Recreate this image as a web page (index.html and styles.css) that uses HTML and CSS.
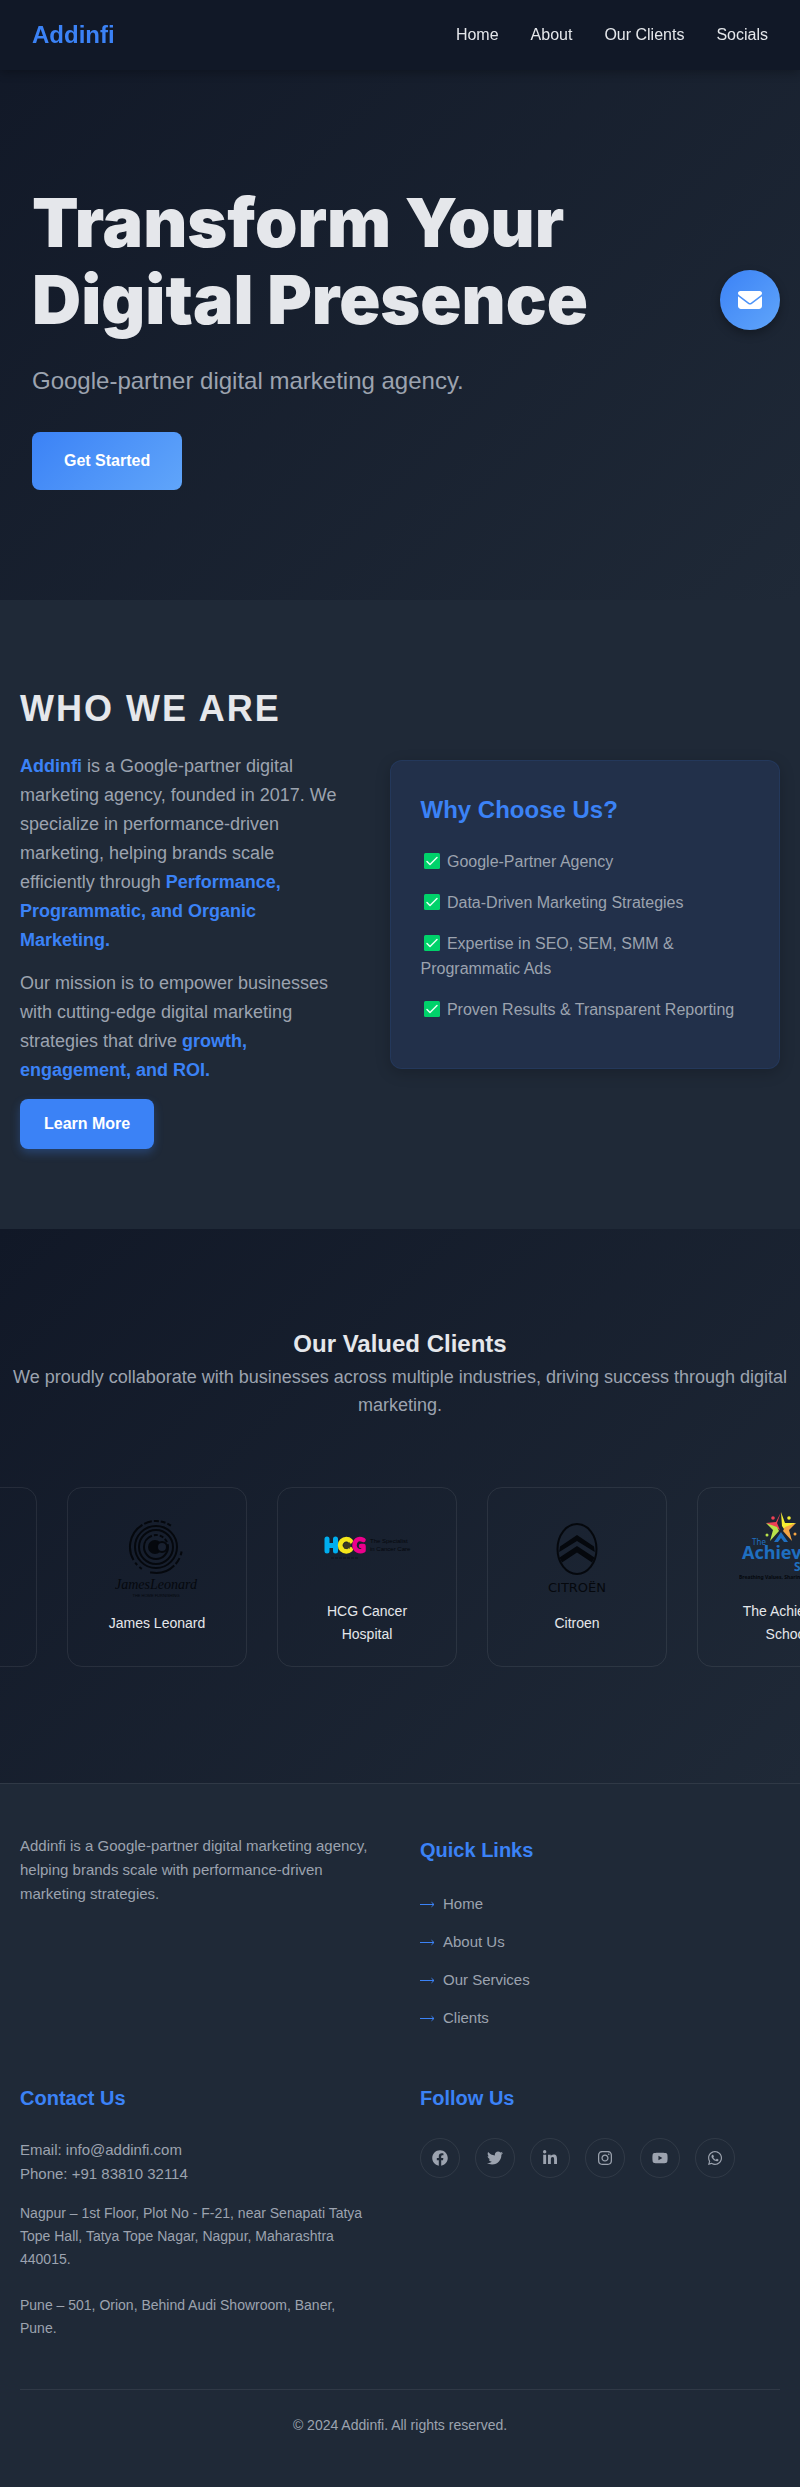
FILE: index.html
```
<!DOCTYPE html>
<html lang="en">
<head>
<meta charset="utf-8">
<meta name="viewport" content="width=device-width, initial-scale=1">
<title>Addinfi</title>
<link rel="stylesheet" href="styles.css">
</head>
<body>
<header class="navbar">
  <a class="brand" href="#home">Addinfi</a>
  <nav class="nav-links">
    <a href="#home">Home</a>
    <a href="#about">About</a>
    <a href="#clients">Our Clients</a>
    <a href="#socials">Socials</a>
  </nav>
</header>

<main>
  <section class="hero" id="home">
    <h1>Transform Your Digital Presence</h1>
    <p>Google-partner digital marketing agency.</p>
    <a class="btn btn-gradient" href="#about">Get Started</a>
    <a class="mail-fab" href="mailto:info@addinfi.com" aria-label="Email us">
      <svg width="24" height="24" viewBox="0 0 512 512" fill="currentColor"><path d="M48 64C21.5 64 0 85.5 0 112c0 15.1 7.1 29.3 19.2 38.4L236.8 313.6c11.400 8.500 27 8.500 38.400 0L492.800 150.400c12.100-9.100 19.200-23.300 19.200-38.400c0-26.500-21.500-48-48-48H48zM0 176V384c0 35.300 28.700 64 64 64H448c35.300 0 64-28.700 64-64V176L294.400 339.200c-22.800 17.100-54 17.100-76.800 0L0 176z"/></svg>
    </a>
  </section>

  <section class="about" id="about">
    <div class="about-text">
      <h2>WHO WE ARE</h2>
      <p><strong>Addinfi</strong> is a Google-partner digital marketing agency, founded in 2017. We specialize in performance-driven marketing, helping brands scale efficiently through <strong>Performance, Programmatic, and Organic Marketing.</strong></p>
      <p>Our mission is to empower businesses with cutting-edge digital marketing strategies that drive <strong>growth, engagement, and ROI.</strong></p>
      <a class="btn btn-solid" href="#clients">Learn More</a>
    </div>
    <div class="why-card">
      <h3>Why Choose Us?</h3>
      <ul>
        <li><svg class="check" viewBox="0 0 22 16"><rect x="3" width="16" height="16" rx="1.500" fill="#00d26a"/><path d="M6 8.500l3 3 7-7" fill="none" stroke="#e6fff2" stroke-width="1.500" stroke-linecap="round" stroke-linejoin="round"/></svg> Google-Partner Agency</li>
        <li><svg class="check" viewBox="0 0 22 16"><rect x="3" width="16" height="16" rx="1.500" fill="#00d26a"/><path d="M6 8.500l3 3 7-7" fill="none" stroke="#e6fff2" stroke-width="1.500" stroke-linecap="round" stroke-linejoin="round"/></svg> Data-Driven Marketing Strategies</li>
        <li><svg class="check" viewBox="0 0 22 16"><rect x="3" width="16" height="16" rx="1.500" fill="#00d26a"/><path d="M6 8.500l3 3 7-7" fill="none" stroke="#e6fff2" stroke-width="1.500" stroke-linecap="round" stroke-linejoin="round"/></svg> Expertise in SEO, SEM, SMM &amp; Programmatic Ads</li>
        <li><svg class="check" viewBox="0 0 22 16"><rect x="3" width="16" height="16" rx="1.500" fill="#00d26a"/><path d="M6 8.500l3 3 7-7" fill="none" stroke="#e6fff2" stroke-width="1.500" stroke-linecap="round" stroke-linejoin="round"/></svg> Proven Results &amp; Transparent Reporting</li>
      </ul>
    </div>
  </section>

  <section class="clients" id="clients">
    <div class="clients-head">
      <h2>Our Valued Clients</h2>
      <p>We proudly collaborate with businesses across multiple industries, driving success through digital marketing.</p>
    </div>
    <div class="carousel">
      <div class="track">
        <div class="client" aria-hidden="true"></div>
        <div class="client">
          <svg class="logo" viewBox="0 0 96 80" fill="none" stroke="#05080d">
            <circle cx="47" cy="27" r="26" stroke-width="2" stroke-dasharray="4 3 7 2 26 9 3 3 3 3 40 2 8 2 5 2 5 2 4 60" transform="rotate(10 47 27)"/>
            <circle cx="47" cy="27" r="21" stroke-width="2"/>
            <circle cx="47" cy="27" r="17" stroke-width="2"/>
            <circle cx="47" cy="27" r="12" stroke-width="2" stroke-dasharray="52 2 4 2 4 2 4 2"/>
            <circle cx="46" cy="27" r="7" fill="#05080d" stroke="none"/>
            <circle cx="53" cy="27" r="5" stroke="#05080d" fill="#18202f" stroke-width="2"/>
            <text x="47" y="69" class="mark mark-script">JamesLeonard</text>
            <text x="47" y="77" class="mark mark-tiny">THE HOME FURNISHING</text>
          </svg>
          <span>James Leonard</span>
        </div>
        <div class="client">
          <svg class="logo" viewBox="0 0 96 80">
            <g fill="none" stroke-width="5" stroke-linecap="round" stroke-linejoin="round">
              <path d="M8 31v12M16.500 31v12M8 37.500h8.500" stroke="#00aeef"/>
              <path d="M31.500 33a6 6 0 1 0 0 8.500" stroke="#f4e61a"/>
              <path d="M44.500 32c-6-3-9 1-9 5.500s5 7 9 5V38h-2.500" stroke="#ec008c" stroke-width="4.500"/>
            </g>
            <path d="M28 33.500l1 1.500 1.500-1 .3 1.700 1.700.3-1 1.500 1 1.500-1.700.3-.3 1.700-1.500-1-1 1.500-1-1.500-1.500 1-.3-1.700-1.200-.5.700-1.300-.7-1.500 1.500-.3.300-1.700 1.500 1z" fill="#3c3a22"/>
            <text x="51" y="35" class="mark mark-small">The Specialist</text>
            <text x="51" y="43" class="mark mark-small">in Cancer Care</text>
            <path d="M12 50h28" stroke="#0d121c" stroke-dasharray="3 1"/>
          </svg>
          <span>HCG Cancer Hospital</span>
        </div>
        <div class="client">
          <svg class="logo" viewBox="0 0 96 80">
            <ellipse cx="48" cy="29" rx="19.500" ry="25" fill="none" stroke="#05080d" stroke-width="2"/>
            <path d="M48 15l17 11.500.8 5.500L48 21 30.200 32l.8-5.500z" fill="#05080d"/>
            <path d="M48 26l17.500 11.500-2.500 5L48 32.500 33 42.500l-2.500-5z" fill="#05080d"/>
            <text x="48" y="72" class="mark mark-wide">CITROËN</text>
          </svg>
          <span>Citroen</span>
        </div>
        <div class="client">
          <svg class="logo" viewBox="0 0 96 80">
            <g transform="translate(42 20)">
              <path d="M0-16L-4-5-1 2-9-2-15-5-5-6z" fill="#ef4155"/>
              <path d="M0-16L4-5 15-5 3 1 1-2z" fill="#f5ee31"/>
              <path d="M-15-5L-8 2-11 13-2 3-4-1z" fill="#b9e34a"/>
              <path d="M15-5L8 2 11 13 2 3 4-1z" fill="#f5a544"/>
              <path d="M0 4L7 14H3L0 10-3 14H-7z" fill="#1f6fc0"/>
              <circle cx="-8" cy="-10" r="1.800" fill="#ef4155"/>
              <circle cx="8" cy="-10" r="1.800" fill="#f5ee31"/>
              <circle cx="-14" cy="7" r="1.500" fill="#b9e34a"/>
              <circle cx="14" cy="6" r="1.500" fill="#f5a544"/>
            </g>
            <text x="13" y="37" class="mark mark-the">The</text>
            <text x="3" y="51" class="mark mark-achievers">Achievers</text>
            <text x="55" y="63" class="mark mark-school">School</text>
            <text x="0" y="71" class="mark mark-tag">Breathing Values, Sharing Wisdom</text>
          </svg>
          <span>The Achievers School</span>
        </div>
      </div>
    </div>
  </section>
</main>

<footer class="footer" id="socials">
  <div class="footer-grid">
    <div>
      <p class="footer-about">Addinfi is a Google-partner digital marketing agency, helping brands scale with performance-driven marketing strategies.</p>
    </div>
    <div>
      <h3>Quick Links</h3>
      <ul class="quick">
        <li><a href="#home"><svg class="arrow" viewBox="0 0 15 7"><path d="M0 3.500h14M11.500 1.200l2.500 2.300-2.500 2.300"/></svg>Home</a></li>
        <li><a href="#about"><svg class="arrow" viewBox="0 0 15 7"><path d="M0 3.500h14M11.500 1.200l2.500 2.300-2.500 2.300"/></svg>About Us</a></li>
        <li><a href="#services"><svg class="arrow" viewBox="0 0 15 7"><path d="M0 3.500h14M11.500 1.200l2.500 2.300-2.500 2.300"/></svg>Our Services</a></li>
        <li><a href="#clients"><svg class="arrow" viewBox="0 0 15 7"><path d="M0 3.500h14M11.500 1.200l2.500 2.300-2.500 2.300"/></svg>Clients</a></li>
      </ul>
    </div>
    <div>
      <h3>Contact Us</h3>
      <p class="contact">Email: info@addinfi.com<br>Phone: +91 83810 32114</p>
      <address>Nagpur – 1st Floor, Plot No - F-21, near Senapati Tatya Tope Hall, Tatya Tope Nagar, Nagpur, Maharashtra 440015.<br><br>Pune – 501, Orion, Behind Audi Showroom, Baner, Pune.</address>
    </div>
    <div>
      <h3>Follow Us</h3>
      <div class="social">
        <a href="#facebook" aria-label="Facebook"><svg viewBox="0 0 512 512"><path d="M504 256C504 119 393 8 256 8S8 119 8 256c0 123.780 90.690 226.380 209.250 245V327.690h-63V256h63v-54.640c0-62.150 37-96.480 93.670-96.480 27.140 0 55.520 4.840 55.520 4.840v61h-31.280c-30.800 0-40.410 19.120-40.410 38.730V256h68.780l-11 71.690h-57.780V501C413.310 482.380 504 379.780 504 256z"/></svg></a>
        <a href="#twitter" aria-label="Twitter"><svg viewBox="0 0 512 512"><path d="M459.370 151.716c.325 4.548.325 9.097.325 13.645 0 138.720-105.583 298.558-298.558 298.558-59.452 0-114.680-17.219-161.137-47.106 8.447.974 16.568 1.299 25.340 1.299 49.055 0 94.213-16.568 130.274-44.832-46.132-.975-84.792-31.188-98.112-72.772 6.498.974 12.995 1.624 19.818 1.624 9.421 0 18.843-1.300 27.614-3.573-48.081-9.747-84.143-51.980-84.143-102.985v-1.299c13.969 7.797 30.214 12.670 47.431 13.319-28.264-18.843-46.781-51.005-46.781-87.391 0-19.492 5.197-37.360 14.294-52.954 51.655 63.675 129.300 105.258 216.365 109.807-1.624-7.797-2.599-15.918-2.599-24.040 0-57.828 46.782-104.934 104.934-104.934 30.213 0 57.502 12.670 76.670 33.137 23.715-4.548 46.456-13.320 66.599-25.340-7.798 24.366-24.366 44.833-46.132 57.827 21.117-2.273 41.584-8.122 60.426-16.243-14.292 20.791-32.161 39.308-52.628 54.253z"/></svg></a>
        <a href="#linkedin" aria-label="LinkedIn"><svg viewBox="-32 0 512 512"><path d="M100.280 448H7.400V148.900h92.880zM53.790 108.100C24.090 108.100 0 83.500 0 53.800a53.790 53.790 0 0 1 107.580 0c0 29.700-24.100 54.300-53.790 54.300zM447.900 448h-92.680V302.400c0-34.700-.7-79.200-48.290-79.200-48.290 0-55.690 37.700-55.690 76.700V448h-92.780V148.900h89.080v40.800h1.300c12.400-23.500 42.690-48.300 87.880-48.300 94 0 111.280 61.900 111.280 142.300V448z"/></svg></a>
        <a href="#instagram" aria-label="Instagram"><svg viewBox="-32 0 512 512"><path d="M224.100 141c-63.600 0-114.900 51.300-114.900 114.900s51.300 114.900 114.900 114.900S339 319.500 339 255.900 287.700 141 224.100 141zm0 189.600c-41.100 0-74.700-33.500-74.700-74.700s33.500-74.700 74.700-74.700 74.700 33.500 74.700 74.700-33.600 74.700-74.700 74.700zm146.400-194.300c0 14.900-12 26.800-26.800 26.800-14.900 0-26.800-12-26.800-26.800s12-26.800 26.800-26.800 26.800 12 26.800 26.800zm76.100 27.200c-1.700-35.900-9.900-67.700-36.200-93.900-26.200-26.200-58-34.400-93.900-36.200-37-2.100-147.900-2.100-184.900 0-35.800 1.700-67.600 9.900-93.900 36.100s-34.400 58-36.200 93.900c-2.100 37-2.100 147.900 0 184.900 1.700 35.900 9.900 67.700 36.200 93.900s58 34.400 93.900 36.200c37 2.100 147.900 2.100 184.900 0 35.900-1.700 67.700-9.900 93.900-36.200 26.200-26.200 34.400-58 36.200-93.900 2.100-37 2.100-147.800 0-184.800zM398.800 388c-7.800 19.600-22.900 34.700-42.600 42.600-29.500 11.700-99.500 9-132.100 9s-102.700 2.600-132.100-9c-19.600-7.800-34.700-22.900-42.600-42.600-11.700-29.500-9-99.500-9-132.100s-2.600-102.700 9-132.100c7.800-19.600 22.900-34.700 42.600-42.600 29.500-11.700 99.500-9 132.100-9s102.700-2.600 132.100 9c19.600 7.800 34.700 22.900 42.600 42.600 11.700 29.500 9 99.500 9 132.100s2.700 102.700-9 132.100z"/></svg></a>
        <a href="#youtube" aria-label="YouTube"><svg viewBox="0 -32 576 576"><path d="M549.655 124.083c-6.281-23.650-24.787-42.276-48.284-48.597C458.781 64 288 64 288 64S117.220 64 74.629 75.486c-23.497 6.322-42.003 24.947-48.284 48.597-11.412 42.867-11.412 132.305-11.412 132.305s0 89.438 11.412 132.305c6.281 23.650 24.787 41.500 48.284 47.821C117.220 448 288 448 288 448s170.780 0 213.371-11.486c23.497-6.321 42.003-24.171 48.284-47.821 11.412-42.867 11.412-132.305 11.412-132.305s0-89.438-11.412-132.305zm-317.510 213.508V175.185l142.739 81.205-142.739 81.201z"/></svg></a>
        <a href="#whatsapp" aria-label="WhatsApp"><svg viewBox="-32 0 512 512"><path d="M380.900 97.100C339 55.100 283.200 32 223.900 32c-122.400 0-222 99.600-222 222 0 39.100 10.200 77.300 29.600 111L0 480l117.700-30.900c32.400 17.700 68.900 27 106.100 27h.1c122.300 0 224.100-99.600 224.100-222 0-59.300-25.200-115-67.100-157zm-157 341.600c-33.200 0-65.700-8.900-94-25.700l-6.700-4-69.800 18.300L72 359.200l-4.400-7c-18.500-29.400-28.200-63.300-28.200-98.200 0-101.700 82.800-184.500 184.600-184.500 49.300 0 95.600 19.200 130.400 54.100 34.800 34.900 56.200 81.200 56.100 130.500 0 101.800-84.900 184.600-186.600 184.600zm101.200-138.200c-5.500-2.800-32.800-16.200-37.900-18-5.100-1.900-8.800-2.800-12.500 2.800-3.700 5.600-14.300 18-17.600 21.800-3.200 3.700-6.500 4.200-12 1.400-32.600-16.300-54-29.100-75.500-66-5.700-9.800 5.700-9.100 16.300-30.300 1.800-3.700.9-6.900-.5-9.700-1.400-2.800-12.500-30.100-17.100-41.200-4.500-10.800-9.100-9.300-12.500-9.500-3.200-.2-6.900-.2-10.600-.2-3.700 0-9.700 1.400-14.800 6.900-5.100 5.600-19.400 19-19.400 46.300 0 27.300 19.900 53.700 22.600 57.400 2.800 3.700 39.100 59.700 94.800 83.800 35.200 15.200 49 16.500 66.600 13.900 10.700-1.600 32.800-13.400 37.400-26.400 4.600-13 4.600-24.100 3.200-26.400-1.300-2.500-5-3.900-10.500-6.600z"/></svg></a>
      </div>
    </div>
  </div>
  <p class="copyright">© 2024 Addinfi. All rights reserved.</p>
</footer>
</body>
</html>
```
FILE: styles.css
```
* {
  box-sizing: border-box;
  margin: 0;
  padding: 0;
}

:root {
  --dark: #111827;
  --panel: #1f2937;
  --blue: #3b82f6;
  --blue-light: #60a5fa;
  --text: #e5e7eb;
  --muted: #9ca3af;
  --line: rgba(255, 255, 255, 0.08);
}

body {
  background: var(--dark);
  color: var(--text);
  font-family: Arial, "Liberation Sans", sans-serif;
  font-size: 16px;
  line-height: 26px;
}

a {
  color: inherit;
  text-decoration: none;
}

ul {
  list-style: none;
}

/* Navigation */
.navbar {
  position: fixed;
  inset: 0 0 auto;
  z-index: 10;
  display: flex;
  align-items: center;
  justify-content: space-between;
  padding: 16px 32px;
  background: var(--dark);
  box-shadow: 0 2px 10px rgba(0, 0, 0, 0.3);
}

.brand {
  color: var(--blue);
  font-size: 24px;
  font-weight: 700;
  line-height: 38px;
}

.nav-links {
  display: flex;
  gap: 32px;
}

/* Hero */
.hero {
  position: relative;
  display: flex;
  flex-direction: column;
  align-items: flex-start;
  justify-content: center;
  min-height: 600px;
  padding: 74px 32px 0;
  background: linear-gradient(135deg, var(--dark), var(--panel));
}

.hero h1 {
  max-width: 640px;
  margin-bottom: 24px;
  font-family: "Arial Black", Inter, sans-serif;
  font-size: 68px;
  font-weight: 900;
  line-height: 77px;
}

.hero p {
  margin-bottom: 32px;
  color: var(--muted);
  font-size: 24px;
  line-height: 38px;
}

.btn {
  display: inline-block;
  border-radius: 8px;
  color: #fff;
  font-weight: 700;
}

.btn-gradient {
  padding: 16px 32px;
  background: linear-gradient(135deg, var(--blue), var(--blue-light));
}

.btn-solid {
  padding: 12px 24px;
  background: var(--blue);
  box-shadow: 0 4px 10px rgba(59, 130, 246, 0.3);
}

.mail-fab {
  position: absolute;
  top: 270px;
  right: 20px;
  display: flex;
  align-items: center;
  justify-content: center;
  width: 60px;
  height: 60px;
  border-radius: 50%;
  background: linear-gradient(135deg, var(--blue), var(--blue-light));
  box-shadow: 0 4px 10px rgba(0, 0, 0, 0.3);
  color: #fff;
}

/* About */
.about {
  display: grid;
  grid-template-columns: minmax(0, 9fr) minmax(0, 11fr);
  gap: 50px;
  align-items: center;
  padding: 80px 20px;
  background: var(--panel);
}

.about-text h2 {
  margin-bottom: 15px;
  font-size: 36px;
  letter-spacing: 2px;
  line-height: 57px;
}

.about-text p {
  margin-bottom: 14px;
  color: var(--muted);
  font-size: 18px;
  line-height: 29px;
}

.about-text strong {
  color: var(--blue);
}

.why-card {
  padding: 30px;
  border: 1px solid rgba(59, 130, 246, 0.1);
  border-radius: 12px;
  background: #22304a;
  box-shadow: 0 4px 15px rgba(0, 0, 0, 0.2);
  color: var(--muted);
}

.why-card h3 {
  margin-bottom: 20px;
  color: var(--blue);
  font-size: 24px;
  line-height: 38px;
}

.why-card li {
  margin-bottom: 16px;
  line-height: 25px;
}

.check {
  width: 22px;
  height: 16px;
  vertical-align: -2px;
}

/* Clients */
.clients {
  padding: 96px 0;
  background: linear-gradient(135deg, var(--dark), var(--panel));
}

.clients-head {
  margin-bottom: 48px;
  padding: 0 12px;
  text-align: center;
}

.clients-head h2 {
  font-size: 24px;
  line-height: 38px;
}

.clients-head p {
  color: var(--muted);
  font-size: 18px;
  line-height: 28px;
}

.carousel {
  overflow: hidden;
  padding: 20px 0;
}

.track {
  display: flex;
  gap: 30px;
  transform: translateX(-143px);
}

.client {
  display: flex;
  flex: 0 0 180px;
  flex-direction: column;
  align-items: center;
  justify-content: center;
  gap: 12px;
  height: 180px;
  padding: 20px 30px;
  border: 1px solid var(--line);
  border-radius: 15px;
  font-size: 14px;
  font-weight: 500;
  line-height: 23px;
  text-align: center;
}

.logo {
  flex: none;
  width: 96px;
  height: 80px;
}

.mark {
  fill: #05080d;
  stroke: none;
}

.mark-script {
  font: italic 14px "Liberation Serif", serif;
  text-anchor: middle;
}

.mark-tiny {
  font: 4px "Liberation Sans", sans-serif;
  text-anchor: middle;
}

.mark-small {
  font: 6px "Liberation Sans", sans-serif;
}

.mark-wide {
  font: 13px "DejaVu Sans", sans-serif;
  text-anchor: middle;
}

.mark-the,
.mark-achievers,
.mark-school {
  fill: #1f6fc0;
}

.mark-the {
  font: 8px "Noto Sans", sans-serif;
}

.mark-achievers {
  font: 700 18px "Noto Sans", sans-serif;
}

.mark-school {
  font: 700 12px "Noto Sans", sans-serif;
}

.mark-tag {
  font: 700 5px "Noto Sans", sans-serif;
}

/* Footer */
.footer {
  padding: 50px 20px;
  border-top: 1px solid var(--line);
  background: var(--panel);
  color: var(--muted);
  font-size: 15px;
  line-height: 24px;
}

.footer-grid {
  display: grid;
  grid-template-columns: repeat(2, minmax(0, 1fr));
  gap: 40px;
  margin-bottom: 49px;
}

.footer h3 {
  margin-bottom: 24px;
  color: var(--blue);
  font-size: 20px;
  line-height: 32px;
}

.quick li {
  margin-bottom: 10px;
  line-height: 28px;
}

.quick a {
  display: flex;
  align-items: center;
  gap: 8px;
}

.arrow {
  width: 15px;
  height: 7px;
  fill: none;
  stroke: var(--blue);
}

.contact {
  margin-bottom: 16px;
}

address {
  padding-right: 12px;
  font-size: 14px;
  font-style: normal;
  line-height: 23px;
}

.social {
  display: flex;
  flex-wrap: wrap;
  gap: 15px;
}

.social a {
  display: flex;
  align-items: center;
  justify-content: center;
  width: 40px;
  height: 40px;
  border: 1px solid var(--line);
  border-radius: 50%;
}

.social svg {
  width: 16px;
  height: 16px;
  fill: currentColor;
}

.copyright {
  padding-top: 24px;
  border-top: 1px solid var(--line);
  font-size: 14px;
  line-height: 23px;
  text-align: center;
}
```
